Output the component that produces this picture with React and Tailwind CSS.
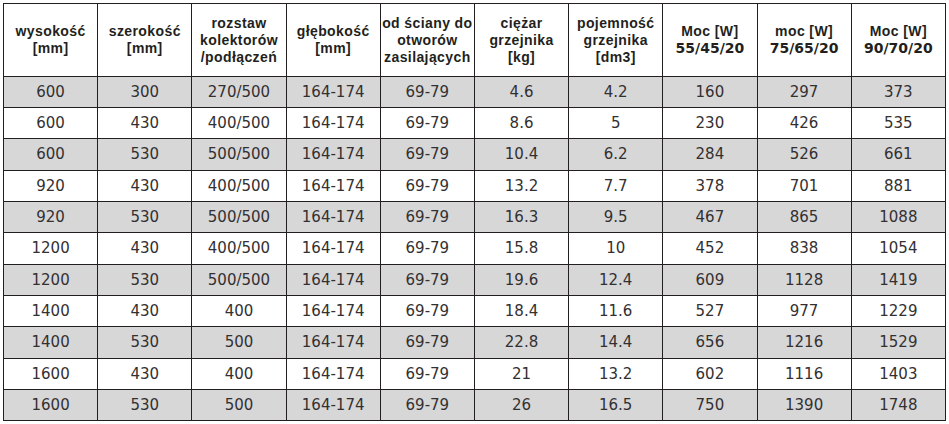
import React from "react";

const headers = [
  ["wysokość", "[mm]"],
  ["szerokość", "[mm]"],
  ["rozstaw", "kolektorów", "/podłączeń"],
  ["głębokość", "[mm]"],
  ["od ściany do", "otworów", "zasilających"],
  ["ciężar", "grzejnika", "[kg]"],
  ["pojemność", "grzejnika", "[dm3]"],
  ["Moc [W]", "55/45/20"],
  ["moc [W]", "75/65/20"],
  ["Moc [W]", "90/70/20"],
];

const rows = [
  ["600", "300", "270/500", "164-174", "69-79", "4.6", "4.2", "160", "297", "373"],
  ["600", "430", "400/500", "164-174", "69-79", "8.6", "5", "230", "426", "535"],
  ["600", "530", "500/500", "164-174", "69-79", "10.4", "6.2", "284", "526", "661"],
  ["920", "430", "400/500", "164-174", "69-79", "13.2", "7.7", "378", "701", "881"],
  ["920", "530", "500/500", "164-174", "69-79", "16.3", "9.5", "467", "865", "1088"],
  ["1200", "430", "400/500", "164-174", "69-79", "15.8", "10", "452", "838", "1054"],
  ["1200", "530", "500/500", "164-174", "69-79", "19.6", "12.4", "609", "1128", "1419"],
  ["1400", "430", "400", "164-174", "69-79", "18.4", "11.6", "527", "977", "1229"],
  ["1400", "530", "500", "164-174", "69-79", "22.8", "14.4", "656", "1216", "1529"],
  ["1600", "430", "400", "164-174", "69-79", "21", "13.2", "602", "1116", "1403"],
  ["1600", "530", "500", "164-174", "69-79", "26", "16.5", "750", "1390", "1748"],
];

const rowHeights = ["h-[31px]", "h-[31px]", "h-[32px]", "h-[31px]", "h-[31px]", "h-[32px]", "h-[31px]", "h-[31px]", "h-[32px]", "h-[31px]", "h-[31px]"];

const isNumLine = (s) => /^[0-9/]+$/.test(s);

export default function App() {
  return (
    <div className="w-[949px] h-[424px] bg-white pl-[3px] pt-[3px]">
      <table className="w-[943px] table-fixed border-collapse">
        <thead>
          <tr className="h-[73px]">
            {headers.map((h, i) => (
              <th
                key={i}
                className="border border-[#231f20] p-0 align-middle text-center font-bold text-[#231f20] whitespace-nowrap"
              >
                {h.map((line, j) =>
                  isNumLine(line) ? (
                    <div key={j} className="text-[14px] leading-[17px] font-['DejaVu_Sans',sans-serif]">
                      {line}
                    </div>
                  ) : (
                    <div key={j} className="text-[14px] leading-[17px] tracking-[0.4px] font-['Liberation_Sans',Arial,sans-serif]">
                      {line}
                    </div>
                  )
                )}
              </th>
            ))}
          </tr>
        </thead>
        <tbody>
          {rows.map((r, i) => (
            <tr key={i} className={`${rowHeights[i]} ${i % 2 === 0 ? "bg-[#d7d7d8]" : "bg-white"}`}>
              {r.map((c, j) => (
                <td
                  key={j}
                  className="border border-[#231f20] p-0 align-middle text-center text-[15px] leading-none text-[#333031] font-['DejaVu_Sans',sans-serif]"
                >
                  {c}
                </td>
              ))}
            </tr>
          ))}
        </tbody>
      </table>
    </div>
  );
}
